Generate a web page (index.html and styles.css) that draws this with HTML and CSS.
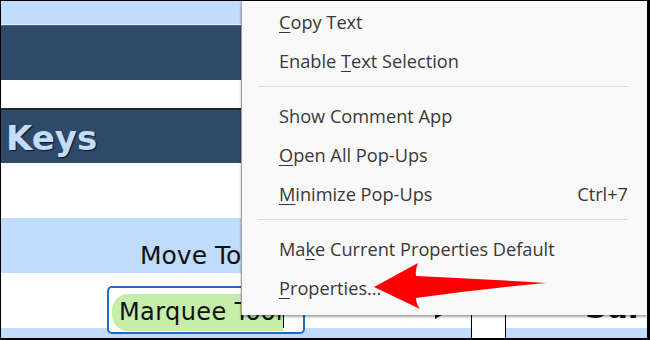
FILE: index.html
```html
<!DOCTYPE html>
<html lang="en">
<head>
  <meta charset="UTF-8" />
  <title>Context menu</title>
  <link rel="stylesheet" href="styles.css">
</head>
<body>
  <div class="screen">
    <div class="band light top"></div>
    <div class="band navy first"></div>
    <div class="band white short"></div>
    <div class="band navy heading">Keys</div>
    <div class="band white"></div>
    <div class="band light move">Move To</div>

    <div class="band white split">
      <div class="cell wide">
        <div class="field">
          <span class="pill">Marquee Tool</span><span class="caret"></span>
        </div>
        <svg class="marker" width="12" height="14" viewBox="0 0 12 14">
          <polygon points="0,0 12,7 0,14" fill="#111"/>
        </svg>
      </div>
      <div class="cell narrow"></div>
      <div class="cell rest"><span class="big">Sur</span></div>
    </div>
    <div class="band light split tail">
      <div class="cell wide"></div>
      <div class="cell narrow white-bg"></div>
      <div class="cell rest"></div>
    </div>

    <!-- context menu over the document -->
    <div class="menu">
      <div class="item"><span><u>C</u>opy Text</span></div>
      <div class="item"><span>Enable <u>T</u>ext Selection</span></div>
      <div class="sep"></div>
      <div class="item"><span>Show Comment App</span></div>
      <div class="item"><span><u>O</u>pen All Pop-Ups</span></div>
      <div class="item"><span><u>M</u>inimize Pop-Ups</span><span class="key">Ctrl+7</span></div>
      <div class="sep"></div>
      <div class="item"><span>Ma<u>k</u>e Current Properties Default</span></div>
      <div class="item"><span><u>P</u>roperties...</span></div>
    </div>

    <svg class="arrow" width="646" height="337" viewBox="0 0 646 337">
      <path d="M373 286 L417 262 Q414 269 415 275 Q480 278 545 282 Q480 288 415 297 Q415 303 419 308 Z" fill="#ff0000"/>
    </svg>
  </div>
</body>
</html>
```

FILE: styles.css
```css
body {
  margin: 0;
  background: #000;
}

.screen {
  width: 646px;
  height: 337px;
  border-style: solid;
  border-color: #000;
  border-width: 1px 3px 2px 1px;
  background: #fff;
  position: relative;
  overflow: hidden;
  font-family: "DejaVu Sans", Verdana, sans-serif;
}

.band {
  height: 55px;
  box-sizing: border-box;
}

.light { background: #c0dcfd; }
.navy { background: #2f4a69; }
.white { background: #fff; }

.top {
  height: 24px;
  border-bottom: 1px solid #e4effc;
}

.first {
  border-top: 1px solid #4b6585;
}

.short {
  height: 30px;
  border-bottom: 2px solid #1d2735;
}

.heading {
  height: 53px;
  padding: 8px 0 0 5px;
  font-size: 34px;
  font-weight: bold;
  line-height: 40px;
  color: #c3dcfb;
  text-shadow: 1px 1px 1px #0c1522;
}

.move {
  padding: 23px 0 0 139px;
  font-size: 25px;
  line-height: 30px;
  color: #111;
}

.split {
  display: flex;
}

.tail {
  height: 10px;
}

.cell {
  box-sizing: border-box;
}

.wide {
  width: 470px;
  display: flex;
  align-items: flex-start;
}

.narrow {
  width: 35px;
  border-left: 1px solid #000;
  border-right: 1px solid #000;
}

.white-bg { background: #fff; }

.rest {
  flex: 1;
  padding: 17px 0 0 79px;
}

.field {
  position: relative;
  margin: 13px 0 0 106px;
  width: 198px;
  height: 48px;
  box-sizing: border-box;
  border: 2px solid #1a6cc6;
  border-radius: 5px;
  background: #fff;
  padding: 5px 0 0 3px;
  display: flex;
  align-items: center;
}

.pill {
  background: #c6eeaa;
  border-radius: 16px 0 0 16px;
  height: 37px;
  line-height: 37px;
  padding: 0 0 0 7px;
  font-size: 24px;
  letter-spacing: 0.4px;
  color: #111;
}

.caret {
  width: 1px;
  height: 24px;
  background: #000;
  margin-top: 6px;
}

.marker {
  margin: 32px 0 0 130px;
}

.big {
  font-size: 30px;
  font-weight: bold;
  color: #111;
  line-height: 36px;
}

.menu {
  position: absolute;
  left: 240px;
  top: 0;
  right: 0;
  background: #f9f9f9;
  border-left: 1px solid #9e9e9e;
  padding: 1px 19px 8px 0;
  box-shadow: 0 2px 2px rgba(0, 0, 0, 0.35);
  font-family: "Open Sans", "Noto Sans", sans-serif;
  font-size: 18.2px;
  color: #383838;
}

.item {
  height: 39px;
  padding-left: 37px;
  display: flex;
  align-items: center;
  justify-content: space-between;
}

.item u {
  text-underline-offset: 3px;
}

.sep {
  height: 1px;
  background: #d8d8d8;
  margin: 6px 0 9px 16px;
}

.arrow {
  position: absolute;
  left: 0;
  top: 0;
  pointer-events: none;
}
```
